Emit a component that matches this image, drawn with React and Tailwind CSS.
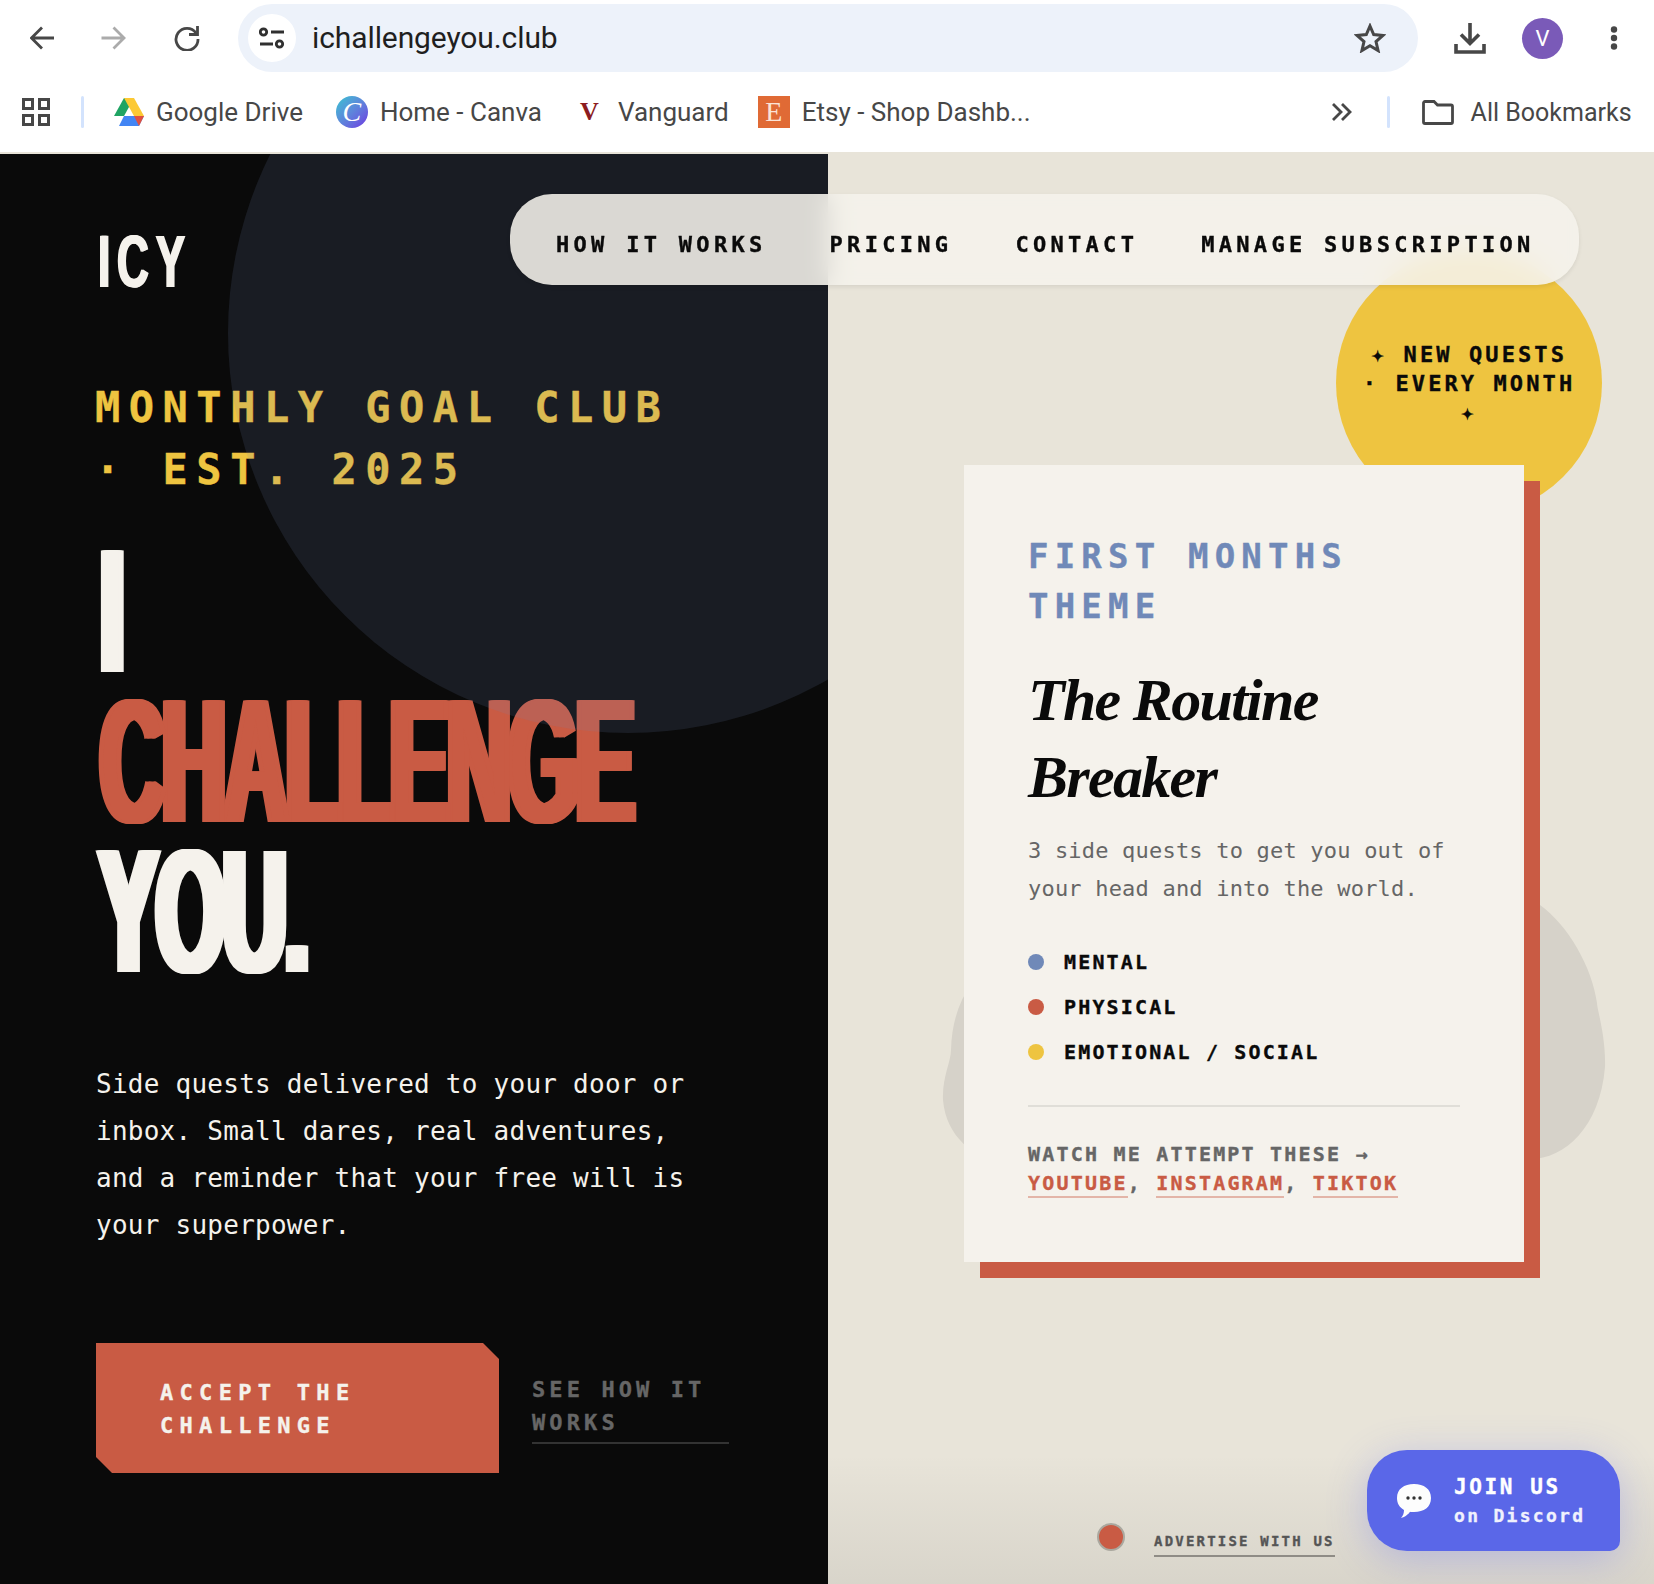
import React from "react";

const MONO = "font-['DejaVu_Sans_Mono',monospace]";
const BOLD = "font-bold [-webkit-text-stroke:0.35px_currentColor]";
const CHROME = "font-['Roboto',sans-serif]";

function Bookmark({ icon, label, className = "" }) {
  return (
    <div className={`flex items-center ${className}`}>
      {icon}
      <span className="text-[26px] leading-none text-[#474747] whitespace-nowrap">{label}</span>
    </div>
  );
}

function Chrome() {
  return (
    <header className={`bg-white h-[152px] ${CHROME}`}>
      <div className="h-[76px] flex items-center pl-[30px]">
        <svg width="24" height="24" viewBox="0 0 24 24" fill="none" stroke="#474747" strokeWidth="2.8"><path d="M24 12H2M12 1.5 1.5 12 12 22.5" /></svg>
        <svg className="ml-[47px]" width="25" height="24" viewBox="0 0 24 24" fill="none" stroke="#ababab" strokeWidth="2.8"><path d="M0 12h22M12 1.5 22.5 12 12 22.5" /></svg>
        <svg className="ml-[48px]" width="26" height="26" viewBox="0 0 26 26" fill="none" stroke="#474747" strokeWidth="2.8"><path d="M22 8a11 11 0 1 0 2 6" /><path d="M23.500 1v8.500H15" /></svg>
        <div className="ml-[38px] w-[1180px] h-[68px] rounded-full bg-[#edf2fa] flex items-center pl-[10px] pr-[32px]">
          <div className="w-[48px] h-[48px] rounded-full bg-white flex items-center justify-center">
            <svg width="26" height="22" viewBox="0 0 26 22" fill="none" stroke="#303030" strokeWidth="2.8"><circle cx="4.500" cy="5" r="3.200" /><path d="M12 5h13M1 17h13" /><circle cx="20.500" cy="17" r="3.200" /></svg>
          </div>
          <span className="ml-[16px] text-[30px] leading-none tracking-[-0.1px] text-[#1f1f1f]">ichallengeyou.club</span>
          <svg className="ml-auto" width="32" height="30" viewBox="0 0 32 30" fill="none" stroke="#474747" strokeWidth="3"><path d="M16 3l3.700 8.600 9.300.8-7 6.100 2.100 9.100L16 22.800 7.900 27.600 10 18.500 3 12.400l9.300-.8z" /></svg>
        </div>
        <svg className="ml-[36px]" width="32" height="32" viewBox="0 0 32 32" fill="none" stroke="#474747" strokeWidth="3.600"><path d="M16 1v20M7 12.500l9 9 9-9" /><path d="M2 22v8h28v-8" /></svg>
        <div className="ml-[36px] w-[41px] h-[41px] rounded-full bg-[#7a5ab8] text-white text-[22px] flex items-center justify-center">V</div>
        <svg className="ml-[47px]" width="8" height="24" viewBox="0 0 8 24" fill="#474747"><circle cx="4" cy="3.500" r="3.200" /><circle cx="4" cy="12" r="3.200" /><circle cx="4" cy="20.500" r="3.200" /></svg>
      </div>
      <div className="h-[76px] pb-[4px] flex items-center pl-[22px]">
        <svg width="28" height="28" viewBox="0 0 28 28" fill="none" stroke="#474747" strokeWidth="3"><path d="M1.500 1.500h9v9h-9zM17.500 1.500h9v9h-9zM1.500 17.500h9v9h-9zM17.500 17.500h9v9h-9z" /></svg>
        <div className="ml-[31px] w-[3px] h-[32px] rounded bg-[#d3e3fd]" />
        <Bookmark
          className="ml-[30px]"
          label="Google Drive"
          icon={
            <svg className="mr-[12px]" width="30" height="28" viewBox="0 0 30 28">
              <path d="M10 0h10L10 18H0z" fill="#1fa463" />
              <path d="M10 0h10l10 18H20z" fill="#fcc934" />
              <path d="M5 28l5-10h20l-5 10z" fill="#4285f4" />
              <path d="M20 18h10l-5 10z" fill="#e0503f" />
            </svg>
          }
        />
        <Bookmark
          className="ml-[33px]"
          label="Home - Canva"
          icon={
            <div className="mr-[12px] w-[32px] h-[32px] rounded-full bg-gradient-to-br from-[#2bc4d0] to-[#6b2fe0] flex items-center justify-center text-white italic text-[28px] leading-none font-['Liberation_Serif',serif]">C</div>
          }
        />
        <Bookmark
          className="ml-[38px]"
          label="Vanguard"
          icon={
            <span className="mr-[19px] w-[19px] text-center text-[26px] leading-none font-bold text-[#8c1c20] font-['Liberation_Serif',serif]">V</span>
          }
        />
        <Bookmark
          className="ml-[29px]"
          label="Etsy - Shop Dashb..."
          icon={
            <div className="mr-[12px] w-[32px] h-[32px] bg-[#e06a35] text-[#fbe3d6] text-[28px] leading-none flex items-center justify-center font-['Liberation_Serif',serif]">E</div>
          }
        />
        <svg className="ml-[300px]" width="21" height="18" viewBox="0 0 21 18" fill="none" stroke="#474747" strokeWidth="2.800"><path d="M2 1l8 8-8 8M11 1l8 8-8 8" /></svg>
        <div className="ml-[35px] w-[3px] h-[32px] rounded bg-[#d3e3fd]" />
        <svg className="ml-[32px]" width="32" height="25" viewBox="0 0 32 25" fill="none" stroke="#474747" strokeWidth="2.800"><path d="M1.500 3a1.500 1.500 0 0 1 1.500-1.500h9l3.500 3.500H29A1.500 1.500 0 0 1 30.500 6.500V22a1.500 1.500 0 0 1-1.500 1.500H3A1.500 1.500 0 0 1 1.500 22z" /></svg>
        <span className="ml-[17px] text-[25px] leading-none text-[#474747] whitespace-nowrap">All Bookmarks</span>
      </div>
    </header>
  );
}

function LeftPanel() {
  const big = "block origin-left scale-x-[0.5] font-['Liberation_Sans',sans-serif] font-bold whitespace-nowrap text-[177px] leading-[150px] [text-shadow:10px_0_0_currentColor,-10px_0_0_currentColor,7.5px_0_0_currentColor,-7.5px_0_0_currentColor,5px_0_0_currentColor,-5px_0_0_currentColor,2.5px_0_0_currentColor,-2.5px_0_0_currentColor]";
  return (
    <section className="relative w-[828px] mt-[2px] h-[1430px] bg-[#0a0a0a] overflow-hidden pl-[96px] pt-[68px]">
      <div className="origin-left scale-x-[0.6] ml-[2px] font-['Liberation_Sans',sans-serif] font-bold text-[74px] leading-[80px] tracking-[11px] text-[#f5f2ec] [text-shadow:1.5px_0_0_currentColor,-1.5px_0_0_currentColor]">ICY</div>
      <p className={`mt-[75px] -ml-[1px] w-[600px] ${MONO} ${BOLD} text-[42px] leading-[62px] tracking-[8.5px] text-[#eec440]`}>MONTHLY GOAL CLUB · EST. 2025</p>
      <h1 className="mt-[35px]">
        <span className={`${big} text-[#f5f2ec] ml-[4px]`}>I</span>
        <span className={`${big} text-[#c95b44] ml-[4px] tracking-[-4px]`}>CHALLENGE</span>
        <span className={`${big} text-[#f5f2ec] ml-[3px] tracking-[-4px]`}>YOU.</span>
      </h1>
      <p className={`mt-[75px] w-[620px] ${MONO} text-[26px] leading-[47px] tracking-[0.25px] text-[#f5f2ec]`}>Side quests delivered to your door or inbox. Small dares, real adventures, and a reminder that your free will is your superpower.</p>
      <div className="mt-[94px] flex items-center gap-[33px]">
        <a className={`w-[403px] h-[130px] bg-[#c95b44] flex items-center pl-[64px] pt-[2px] [clip-path:polygon(0_0,calc(100%-16px)_0,100%_16px,100%_100%,16px_100%,0_calc(100%-16px))] ${MONO} ${BOLD} text-[22px] leading-[33px] tracking-[6.3px] text-[#f5f2ec]`}>
          <span className="w-[270px]">ACCEPT THE CHALLENGE</span>
        </a>
        <a className={`w-[197px] pt-[1px] pb-[3px] border-b-2 border-[#333333] ${MONO} ${BOLD} text-[22px] leading-[33px] tracking-[4.1px] text-[#666666]`}>SEE HOW IT WORKS</a>
      </div>
      <div className="absolute left-[228px] top-[-221px] w-[800px] h-[800px] rounded-full bg-[#7089b8]/15 pointer-events-none" />
    </section>
  );
}

function Dot({ color, label }) {
  return (
    <li className={`h-[45px] flex items-center gap-[20px] ${MONO} ${BOLD} text-[20px] tracking-[2.15px] text-[#0a0a0a]`}>
      <span className={`w-[16px] h-[16px] rounded-full ${color}`} />
      {label}
    </li>
  );
}

function RightPanel() {
  const link = "text-[#c95b44] border-b-2 border-[#c95b44]/40 pb-[1px]";
  return (
    <section className="relative flex-1 h-[1432px] bg-[#e8e4d9] overflow-hidden">
      <div className="absolute left-[508px] top-[98px] w-[266px] h-[266px] rounded-full bg-[#eec440] flex items-center justify-center">
        <p className={`w-[222px] text-center ${MONO} ${BOLD} text-[22px] leading-[29px] tracking-[3.1px] text-[#0a0a0a]`}>✦ NEW QUESTS · EVERY MONTH ✦</p>
      </div>
      <svg className="absolute left-[112px] top-[745px]" width="668" height="270" viewBox="0 0 668 270">
        <path d="M600 8 C 628 28 652 70 657 106 C 657 112 666 140 665 170 C 660 230 625 262 590 262 L 60 262 C 35 262 6 240 3 203 C 2 180 11 165 11 153 C 12 110 30 80 60 60 L 560 0 Z" fill="#d6d2c9" />
      </svg>
      <article className="relative ml-[136px] mt-[313px] w-[560px] h-[797px] bg-[#f5f2ec] shadow-[16px_16px_0_#c95b44] pl-[64px] pr-[64px] pt-[66px]">
        <p className={`${MONO} ${BOLD} text-[34px] leading-[50px] tracking-[6.2px] text-[#7089b8]`}>FIRST MONTHS THEME</p>
        <h2 className="mt-[31px] font-['Liberation_Serif',serif] italic font-bold text-[60px] leading-[77px] tracking-[-1.7px] text-[#0a0a0a]">The Routine Breaker</h2>
        <p className={`mt-[16px] ${MONO} text-[22px] leading-[38px] tracking-[0.2px] text-[#666666]`}>3 side quests to get you out of your head and into the world.</p>
        <ul className="mt-[31px]">
          <Dot color="bg-[#7089b8]" label="MENTAL" />
          <Dot color="bg-[#c95b44]" label="PHYSICAL" />
          <Dot color="bg-[#eec440]" label="EMOTIONAL / SOCIAL" />
        </ul>
        <div className="mt-[31px] h-[2px] bg-[#e0ded8]" />
        <p className={`mt-[33px] ${MONO} ${BOLD} text-[20px] leading-[29px] tracking-[2.2px] text-[#666666]`}>
          WATCH ME ATTEMPT THESE → <span className={link}>YOUTUBE</span>, <span className={link}>INSTAGRAM</span>, <span className={link}>TIKTOK</span>
        </p>
      </article>
      <div className="absolute left-0 right-0 bottom-0 h-[130px] bg-gradient-to-b from-transparent to-[#0a0a0a]/[.07]" />
      <span className="absolute left-[269px] top-[1371px] w-[28px] h-[28px] rounded-full bg-[#c95b44] border-2 border-[#aaa89f]" />
      <a className={`absolute left-[326px] top-[1376px] pb-[1px] border-b-2 border-[#8f8c86] ${MONO} ${BOLD} text-[14px] leading-[26px] tracking-[2.2px] text-[#555555]`}>ADVERTISE WITH US</a>
      <a className="absolute left-[539px] top-[1298px] w-[253px] h-[101px] rounded-tl-[40px] rounded-tr-[40px] rounded-bl-[40px] rounded-br-[10px] bg-[#5a67e8] shadow-[0_8px_40px_rgba(88,101,242,0.3)] flex items-center pl-[29px]">
        <svg width="36" height="36" viewBox="0 0 36 36" className="[filter:blur(0.5px)]">
          <path d="M18 1c10 0 17 5 17 14 0 9-7 14-17 14-2 0-3 0-4-.3-1 2-5 5.300-9 6.300 2-2 3-5 3-8C3 24 1 20 1 15 1 6 8 1 18 1z" fill="#fdfdfd" />
          <circle cx="12" cy="15" r="1.700" fill="#333" />
          <circle cx="18" cy="15" r="1.700" fill="#333" />
          <circle cx="24" cy="15" r="1.700" fill="#333" />
        </svg>
        <div className={`ml-[22px] pt-[1px] ${MONO} ${BOLD} text-white`}>
          <div className="text-[21px] leading-[30px] tracking-[2.6px]">JOIN US</div>
          <div className="text-[18px] leading-[28px] tracking-[2.3px] text-[#f0f1fd]">on Discord</div>
        </div>
      </a>
    </section>
  );
}

export default function App() {
  return (
    <div className="relative w-[1654px] h-[1584px] overflow-hidden bg-[#e8e4d9]">
      <Chrome />
      <main className="relative flex items-start">
        <LeftPanel />
        <RightPanel />
        <nav className={`absolute left-[510px] top-[42px] w-[1069px] h-[91px] rounded-[42px] bg-[#f5f2ec]/[.88] backdrop-blur-md shadow-[0_2px_4px_rgba(0,0,0,0.08)] flex items-center gap-[63px] pl-[46px] pt-[9px] ${MONO} ${BOLD} text-[22px] tracking-[4.3px] text-[#0a0a0a] whitespace-nowrap`}>
          <a>HOW IT WORKS</a>
          <a>PRICING</a>
          <a>CONTACT</a>
          <a>MANAGE SUBSCRIPTION</a>
        </nav>
      </main>
    </div>
  );
}
